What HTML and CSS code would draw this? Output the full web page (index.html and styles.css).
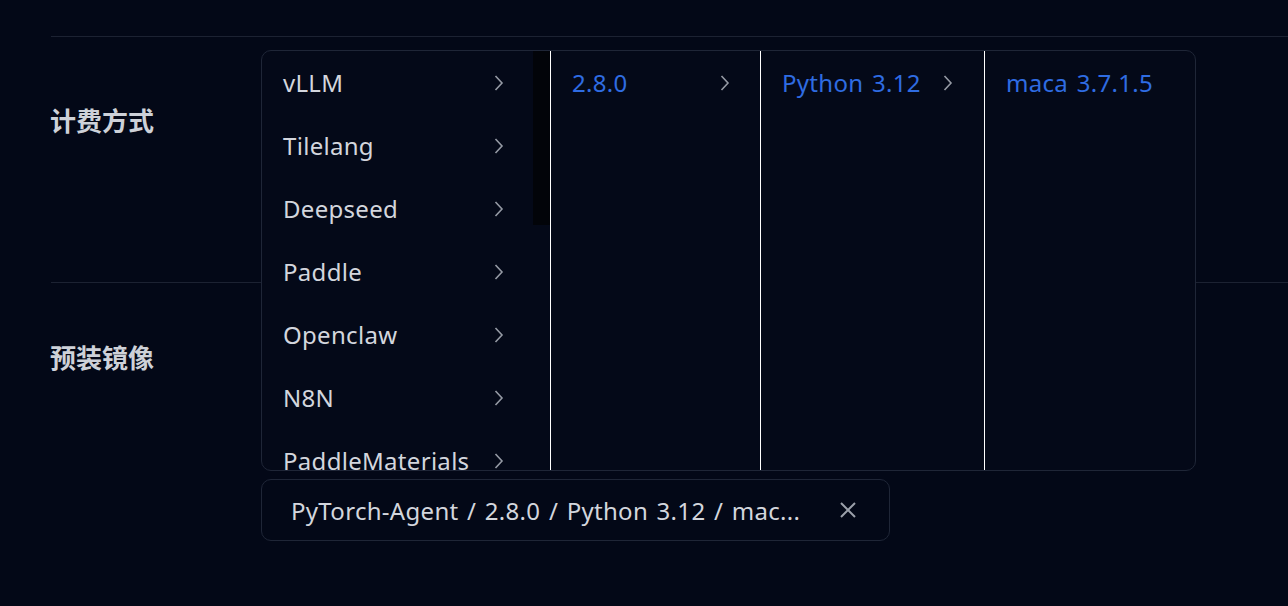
FILE: index.html
```html
<!DOCTYPE html>
<html lang="zh-CN">
<head>
<meta charset="utf-8">
<title>预装镜像</title>
<link rel="stylesheet" href="styles.css">
</head>
<body>
<div class="form">
  <div class="row row-billing">
    <div class="label label-billing">计费方式</div>
    <div class="control"></div>
  </div>
  <div class="row row-image">
    <div class="label label-image">预装镜像</div>
    <div class="control control-image">
      <div class="select-wrap">
        <div class="cascader">
          <ul class="col col-1">
            <li class="item"><span>vLLM</span><svg class="chev" viewBox="0 0 10 18"><path d="M1.5 2 L8 9 L1.5 16"/></svg></li>
            <li class="item"><span>Tilelang</span><svg class="chev" viewBox="0 0 10 18"><path d="M1.5 2 L8 9 L1.5 16"/></svg></li>
            <li class="item"><span>Deepseed</span><svg class="chev" viewBox="0 0 10 18"><path d="M1.5 2 L8 9 L1.5 16"/></svg></li>
            <li class="item"><span>Paddle</span><svg class="chev" viewBox="0 0 10 18"><path d="M1.5 2 L8 9 L1.5 16"/></svg></li>
            <li class="item"><span>Openclaw</span><svg class="chev" viewBox="0 0 10 18"><path d="M1.5 2 L8 9 L1.5 16"/></svg></li>
            <li class="item"><span>N8N</span><svg class="chev" viewBox="0 0 10 18"><path d="M1.5 2 L8 9 L1.5 16"/></svg></li>
            <li class="item"><span>PaddleMaterials</span><svg class="chev" viewBox="0 0 10 18"><path d="M1.5 2 L8 9 L1.5 16"/></svg></li>
          </ul>
          <ul class="col col-2">
            <li class="item active"><span>2.8.0</span><svg class="chev" viewBox="0 0 10 18"><path d="M1.5 2 L8 9 L1.5 16"/></svg></li>
          </ul>
          <ul class="col col-3">
            <li class="item active"><span>Python 3.12</span><svg class="chev" viewBox="0 0 10 18"><path d="M1.5 2 L8 9 L1.5 16"/></svg></li>
          </ul>
          <ul class="col col-4">
            <li class="item active"><span>maca 3.7.1.5</span></li>
          </ul>
        </div>
        <div class="select">
          <span class="value">PyTorch-Agent / 2.8.0 / Python 3.12 / mac...</span>
          <svg class="clear" viewBox="0 0 18 18"><path d="M2 2 L16 16 M16 2 L2 16"/></svg>
        </div>
      </div>
    </div>
  </div>
</div>
</body>
</html>
```

FILE: styles.css
```css
* { box-sizing: border-box; }

html, body {
  margin: 0;
  padding: 0;
  background: #030817;
  height: 100%;
}

body {
  font-family: "Noto Sans", "Noto Sans CJK SC", sans-serif;
  color: #d3d6dd;
  overflow: hidden;
}

.form {
  padding-top: 36px;
  margin-left: 51px;
}

.row {
  border-top: 1px solid #1c2232;
  display: grid;
  grid-template-columns: 210px 1fr;
}

.row-billing {
  height: 246px;
}

.label {
  font-family: "Noto Sans CJK SC", sans-serif;
  font-weight: 700;
  font-size: 26px;
  line-height: 34px;
  color: #cdd1d8;
  margin-left: -1px;
}

.label-billing { padding-top: 66px; }
.label-image { padding-top: 57px; }

.control-image {
  padding-top: 196px;
}

.select-wrap {
  position: relative;
  width: 629px;
}

.select {
  height: 62px;
  border: 1px solid #1f2637;
  border-radius: 10px;
  display: flex;
  align-items: center;
  padding: 0 32px 0 29px;
  justify-content: space-between;
}

.value {
  font-size: 24px;
  color: #d3d6dd;
  white-space: nowrap;
  letter-spacing: 0.3px;
  word-spacing: 2px;
}

.clear {
  width: 18px;
  height: 18px;
  fill: none;
  stroke: #9ba0aa;
  stroke-width: 2;
}

.cascader {
  position: absolute;
  left: 0;
  bottom: 70px;
  width: 935px;
  height: 421px;
  background: #040918;
  border: 1px solid #1f2637;
  border-radius: 10px;
  display: flex;
  overflow: hidden;
}

.col {
  list-style: none;
  margin: 0;
  padding: 0;
  height: 100%;
  border-right: 1px solid #ffffff;
}

.col-1 {
  width: 289px;
  position: relative;
  overflow: hidden;
  padding-right: 17px;
}

/* scrollbar thumb of the first column */
.col-1::after {
  content: "";
  position: absolute;
  top: 0;
  right: 0;
  width: 17px;
  height: 174px;
  background: #020409;
}

.col-2 { width: 210px; }
.col-3 { width: 224px; }
.col-4 { width: 209px; border-right: none; }

.item {
  height: 63px;
  display: flex;
  align-items: center;
  justify-content: space-between;
  padding: 0 30px 0 21px;
  font-size: 24px;
  color: #d3d6dd;
  white-space: nowrap;
  letter-spacing: 0.3px;
  word-spacing: 2px;
}

.col-1 .item { padding-right: 29px; }
.col-3 .item { padding-right: 31px; }

.item.active { color: #2f6ce2; }

.chev {
  width: 10px;
  height: 18px;
  flex: none;
  fill: none;
  stroke: #9499a3;
  stroke-width: 1.6;
}
```
